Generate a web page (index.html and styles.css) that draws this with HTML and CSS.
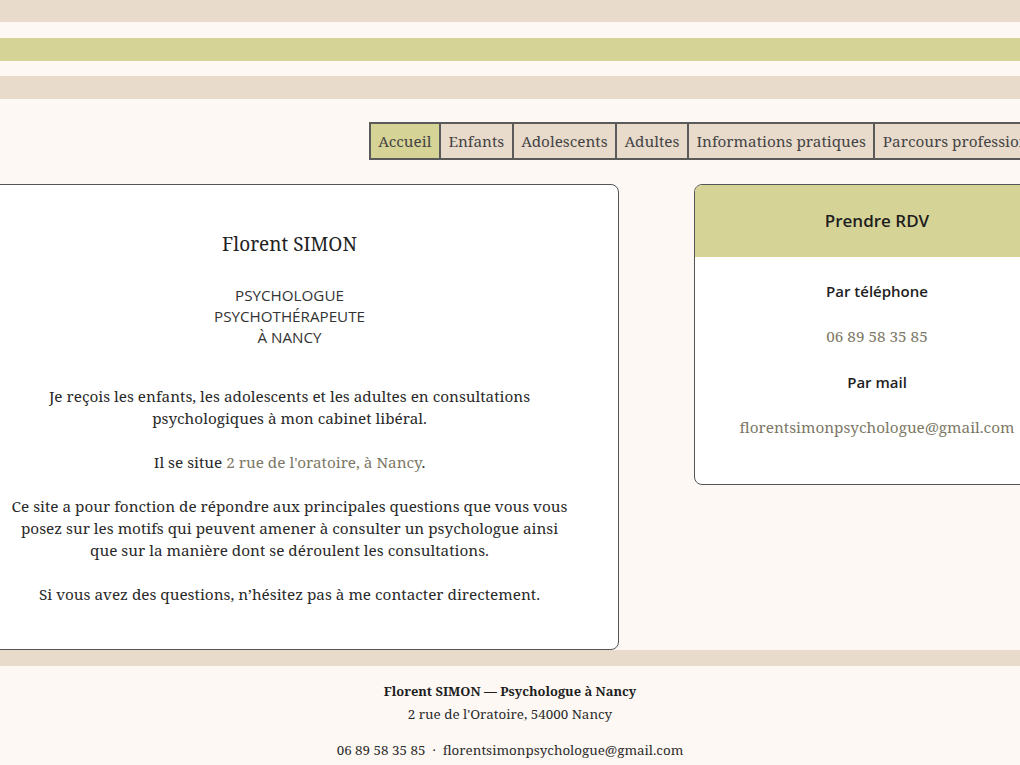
FILE: index.html
```html
<!DOCTYPE html>
<html lang="fr">
<head>
<meta charset="utf-8">
<title>Florent SIMON — Psychologue à Nancy</title>
<link rel="stylesheet" href="styles.css">
</head>
<body>
<header class="stripes">
  <div class="stripe stripe-beige stripe-top"></div>
  <div class="stripe stripe-olive"></div>
  <div class="stripe stripe-beige stripe-bottom"></div>
</header>
<div class="page">
  <nav class="nav">
    <a class="nav-item active" href="#">Accueil</a>
    <a class="nav-item" href="#">Enfants</a>
    <a class="nav-item" href="#">Adolescents</a>
    <a class="nav-item" href="#">Adultes</a>
    <a class="nav-item" href="#">Informations pratiques</a>
    <a class="nav-item" href="#">Parcours professionnel</a>
  </nav>
  <div class="content">
    <main class="card main-card">
      <h1 class="name">Florent SIMON</h1>
      <p class="title">PSYCHOLOGUE<br>PSYCHOTHÉRAPEUTE<br>À NANCY</p>
      <p class="text">Je reçois les enfants, les adolescents et les adultes en consultations psychologiques à mon cabinet libéral.</p>
      <p class="text">Il se situe <a class="link" href="#">2 rue de l'oratoire, à Nancy</a>.</p>
      <p class="text">Ce site a pour fonction de répondre aux principales questions que vous vous posez sur les motifs qui peuvent amener à consulter un psychologue ainsi que sur la manière dont se déroulent les consultations.</p>
      <p class="text">Si vous avez des questions, n’hésitez pas à me contacter directement.</p>
    </main>
    <aside class="card side-card">
      <div class="side-head">Prendre RDV</div>
      <div class="side-body">
        <h3 class="side-label">Par téléphone</h3>
        <a class="link side-link" href="#">06 89 58 35 85</a>
        <h3 class="side-label">Par mail</h3>
        <a class="link side-link" href="#">florentsimonpsychologue@gmail.com</a>
      </div>
    </aside>
  </div>
</div>
<footer class="footer">
  <div class="footer-name">Florent SIMON — Psychologue à Nancy</div>
  <div class="footer-line">2 rue de l'Oratoire, 54000 Nancy</div>
  <div class="footer-line footer-contact">06 89 58 35 85 &nbsp;·&nbsp; florentsimonpsychologue@gmail.com</div>
</footer>
</body>
</html>
```
FILE: styles.css
```css
html, body {
  margin: 0;
  padding: 0;
}
body {
  background: #fdf8f4;
  font-family: "Noto Serif", "DejaVu Serif", serif;
  color: #2b2b2b;
  overflow-x: hidden;
  width: 1020px;
}
.stripes {
  display: flex;
  flex-direction: column;
}
.stripe {
  height: 23px;
}
.stripe-top {
  height: 22px;
}
.stripe-olive {
  margin-top: 16px;
}
.stripe-bottom {
  margin-top: 15px;
}
.stripe-beige {
  background: #e9dbcc;
}
.stripe-olive {
  background: #d6d397;
}
.page {
  width: 1100px;
  margin-left: -40px;
}
.nav {
  display: flex;
  justify-content: flex-end;
  margin-top: 23px;
  margin-right: -1px;
  height: 38px;
}
.nav-item {
  display: flex;
  align-items: center;
  padding: 0 7.5px;
  background: #e9dbcc;
  border: 2px solid #5a5a5a;
  border-right: none;
  color: #444;
  text-decoration: none;
  font-size: 15.3px;
  white-space: nowrap;
}
.nav-item:last-child {
  border-right: 2px solid #5a5a5a;
}
.nav-item.active {
  background: #d6d397;
}
.content {
  display: flex;
  align-items: flex-start;
  gap: 75px;
  margin-top: 24px;
}
.card {
  background: #fff;
  border: 1px solid #555;
  border-radius: 8px;
  box-sizing: border-box;
}
.main-card {
  width: 659px;
  height: 466px;
  padding: 45px 48px 0;
  text-align: center;
}
.name {
  margin: 0;
  font-weight: 400;
  font-size: 19px;
  line-height: 28px;
  color: #222;
}
.title {
  margin: 27px 0 0;
  font-family: "Open Sans", "Noto Sans", sans-serif;
  font-size: 15.2px;
  line-height: 21px;
  color: #333;
}
.text {
  margin: 0 0 22px;
  font-size: 15.3px;
  line-height: 22px;
  color: #2a2a2a;
}
.title + .text {
  margin-top: 37px;
}
.link {
  color: #7d7866;
  text-decoration: none;
}
.side-card {
  width: 366px;
  height: 301px;
  overflow: hidden;
}
.side-head {
  background: #d6d397;
  height: 72px;
  display: flex;
  align-items: center;
  justify-content: center;
  padding-bottom: 2px;
  box-sizing: border-box;
  font-family: "Open Sans", "Noto Sans", sans-serif;
  font-weight: 600;
  font-size: 17px;
  color: #1e1e1e;
}
.side-body {
  display: flex;
  flex-direction: column;
  align-items: center;
  padding-top: 23px;
}
.side-label {
  margin: 0;
  font-family: "Open Sans", "Noto Sans", sans-serif;
  font-weight: 600;
  font-size: 15px;
  line-height: 22px;
  color: #1e1e1e;
}
.side-link {
  font-size: 15.3px;
  line-height: 22px;
  margin: 23px 0 24px;
}
.footer {
  border-top: 16px solid #e9dbcc;
  padding-top: 14px;
  text-align: center;
  font-size: 13.4px;
  line-height: 23px;
  color: #2b2b2b;
  height: 100px;
}
.footer-name {
  font-weight: 700;
  font-size: 12.9px;
  color: #1e1e1e;
}
.footer-contact {
  margin-top: 13px;
}
```
